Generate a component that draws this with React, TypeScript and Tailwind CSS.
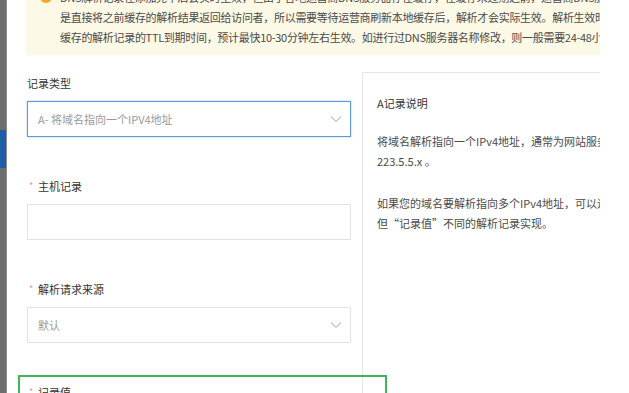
import React from "react";

const font = { fontFamily: '"Noto Sans CJK SC", "Noto Sans", sans-serif' };

function Chevron() {
  return (
    <svg width="12" height="8" viewBox="0 0 12 8" className="shrink-0">
      <path d="M1 1.5 L6 6.5 L11 1.5" fill="none" stroke="#c4c4c4" strokeWidth="1.1" />
    </svg>
  );
}

function Label({ text, required }: { text: string; required?: boolean }) {
  return (
    <div className="flex items-center h-[20px] text-[11px] text-[#333] leading-[20px]">
      {required && <span className="text-[#f08fa0] text-[9px] w-[9px] ml-[2px]">*</span>}
      <span>{text}</span>
    </div>
  );
}

function Select({ value, active }: { value: string; active?: boolean }) {
  return (
    <div
      className={`mt-[8px] h-[36px] w-[324px] flex items-center justify-between pl-[10px] pr-[8px] bg-white border ${
        active ? "border-[#5b9ad8] shadow-[0_0_2px_rgba(91,154,216,0.5)]" : "border-[#e3e3e3]"
      }`}
    >
      <span className="text-[11px] text-[#9a9a9a]">{value}</span>
      <Chevron />
    </div>
  );
}

export default function App() {
  return (
    <div className="relative w-[629px] h-[393px] overflow-hidden bg-white flex" style={font}>
      {/* sidebar edge */}
      <div className="w-[7px] shrink-0 flex flex-col bg-[#6e6e6e] border-r border-[#8a8a8a]">
        <div className="h-[130px]" />
        <div className="h-[38px] bg-[#1f5ea6]" />
      </div>

      <div className="w-[593px] shrink-0 pl-[19px] overflow-hidden">
        {/* notice */}
        <div className="relative -mt-[13px] bg-[#fdf9e7] pl-[34px] pb-[8px] text-[11px] leading-[20px] tracking-[-0.3px] text-[#4a4a4a] whitespace-nowrap">
          <span className="absolute left-[14px] top-[4px] w-[12px] h-[12px] rounded-full bg-[#f5a623]" />
          <div>DNS解析记录在添加完毕后会实时生效，但由于各地运营商DNS服务器存在缓存，在缓存未过期之前，运营商DNS服务器还</div>
          <div>是直接将之前缓存的解析结果返回给访问者，所以需要等待运营商刷新本地缓存后，解析才会实际生效。解析生效时间取决于运营商本地</div>
          <div>缓存的解析记录的TTL到期时间，预计最快10-30分钟左右生效。如进行过DNS服务器名称修改，则一般需要24-48小时</div>
        </div>

        <div className="flex pl-[1px]">
          {/* form column */}
          <div className="w-[324px] shrink-0 pt-[18px]">
            <Label text="记录类型" />
            <Select value="A- 将域名指向一个IPV4地址" active />

            <div className="mt-[39px]">
              <Label text="主机记录" required />
              <div className="mt-[8px] h-[36px] w-[324px] border border-[#e3e3e3] bg-white" />
            </div>

            <div className="mt-[39px]">
              <Label text="解析请求来源" required />
              <Select value="默认" />
            </div>

            <div className="mt-[39px]">
              <Label text="记录值" required />
            </div>
          </div>

          {/* help panel */}
          <div className="ml-[11px] mt-[17px] w-[300px] shrink-0 h-[400px] border-l border-t border-[#e6e6e6] pl-[14px] pt-[20px] text-[11px] leading-[20px] text-[#4a4a4a] whitespace-nowrap">
            <div className="text-[#333]">A记录说明</div>
            <div className="mt-[18px]">
              <div>将域名解析指向一个IPv4地址，通常为网站服务器的公网IP地址，例如</div>
              <div>223.5.5.x 。</div>
            </div>
            <div className="mt-[22px]">
              <div>如果您的域名要解析指向多个IPv4地址，可以通过添加多条主机记录相同</div>
              <div>但“记录值”不同的解析记录实现。</div>
            </div>
          </div>
        </div>
      </div>

      {/* highlight annotation */}
      <div className="absolute left-[18px] top-[375px] w-[369px] h-[40px] border-2 border-[#3fb45c]" />
    </div>
  );
}
